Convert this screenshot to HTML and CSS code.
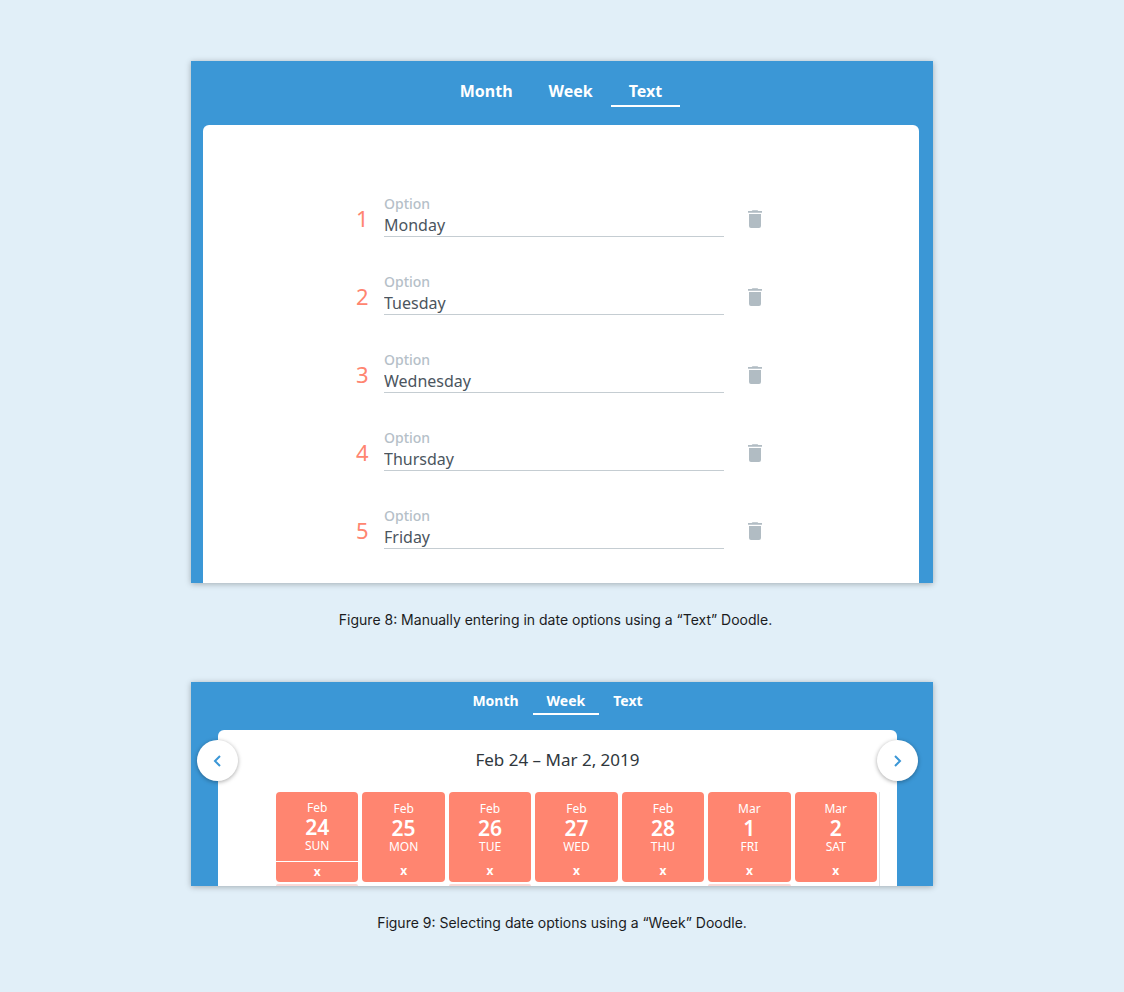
FILE: index.html
```html
<!DOCTYPE html>
<html lang="en">
<head>
<meta charset="utf-8">
<meta name="viewport" content="width=device-width, initial-scale=1">
<title>Doodle date options</title>
<link rel="stylesheet" href="styles.css">
</head>
<body>
<svg class="defs" width="0" height="0" aria-hidden="true">
  <symbol id="trash" viewBox="0 0 14 18"><path d="M4.5 0.3h5l.8.7H14v1.7H0V1h3.7zM1 4h12v12a2 2 0 0 1-2 2H3a2 2 0 0 1-2-2z" fill="currentColor"/></symbol>
</svg>
<main class="page">
  <figure class="figure">
    <div class="shot">
      <nav class="tabs tabs-large">
        <button class="tab" type="button">Month</button>
        <button class="tab" type="button">Week</button>
        <button class="tab active" type="button">Text</button>
      </nav>
      <div class="card card-text">
        <ol class="options">
          <li class="option"><span class="num">1</span><div class="field"><label for="o1">Option</label><input id="o1" type="text" value="Monday"></div><button class="delete" type="button" aria-label="Delete option 1"><svg><use href="#trash"/></svg></button></li>
          <li class="option"><span class="num">2</span><div class="field"><label for="o2">Option</label><input id="o2" type="text" value="Tuesday"></div><button class="delete" type="button" aria-label="Delete option 2"><svg><use href="#trash"/></svg></button></li>
          <li class="option"><span class="num">3</span><div class="field"><label for="o3">Option</label><input id="o3" type="text" value="Wednesday"></div><button class="delete" type="button" aria-label="Delete option 3"><svg><use href="#trash"/></svg></button></li>
          <li class="option"><span class="num">4</span><div class="field"><label for="o4">Option</label><input id="o4" type="text" value="Thursday"></div><button class="delete" type="button" aria-label="Delete option 4"><svg><use href="#trash"/></svg></button></li>
          <li class="option"><span class="num">5</span><div class="field"><label for="o5">Option</label><input id="o5" type="text" value="Friday"></div><button class="delete" type="button" aria-label="Delete option 5"><svg><use href="#trash"/></svg></button></li>
        </ol>
      </div>
    </div>
    <figcaption class="caption caption-text">Figure 8: Manually entering in date options using a “Text” Doodle.</figcaption>
  </figure>

  <figure class="figure">
    <div class="shot">
      <nav class="tabs tabs-small">
        <button class="tab" type="button">Month</button>
        <button class="tab active" type="button">Week</button>
        <button class="tab" type="button">Text</button>
      </nav>
      <div class="card card-week">
        <button class="arrow prev" type="button" aria-label="Previous week"><svg viewBox="0 0 12 12"><path d="M8 1 3 6l5 5"/></svg></button>
        <button class="arrow next" type="button" aria-label="Next week"><svg viewBox="0 0 12 12"><path d="m3 1 5 5-5 5"/></svg></button>
        <h2 class="range">Feb 24 – Mar 2, 2019</h2>
        <div class="week">
          <div class="day split"><span>Feb</span><strong>24</strong><span>SUN</span><button type="button">x</button></div>
          <div class="day"><span>Feb</span><strong>25</strong><span>MON</span><button type="button">x</button></div>
          <div class="day"><span>Feb</span><strong>26</strong><span>TUE</span><button type="button">x</button></div>
          <div class="day"><span>Feb</span><strong>27</strong><span>WED</span><button type="button">x</button></div>
          <div class="day"><span>Feb</span><strong>28</strong><span>THU</span><button type="button">x</button></div>
          <div class="day"><span>Mar</span><strong>1</strong><span>FRI</span><button type="button">x</button></div>
          <div class="day"><span>Mar</span><strong>2</strong><span>SAT</span><button type="button">x</button></div>
          <i class="slot"></i><i></i><i class="slot"></i><i></i><i></i><i class="slot"></i><i></i>
        </div>
      </div>
    </div>
    <figcaption class="caption">Figure 9: Selecting date options using a “Week” Doodle.</figcaption>
  </figure>
</main>
</body>
</html>
```

FILE: styles.css
```css
* { box-sizing: border-box; }

body {
  margin: 0;
  background: #e1eff8;
  font-family: "Noto Sans", "Open Sans", sans-serif;
}

button {
  border: 0;
  padding: 0;
  background: none;
  color: inherit;
  font-family: inherit;
}

.defs { position: absolute; }

.page {
  display: flex;
  flex-direction: column;
  gap: 52px;
  max-width: 742px;
  margin: 0 auto;
  padding: 61px 0;
}

.figure { margin: 0; }

.shot {
  overflow: hidden;
  background: #3b97d6;
  box-shadow: 0 1px 6px rgba(0, 0, 0, 0.28);
}

.tabs {
  display: flex;
  justify-content: center;
  color: #fff;
}

.tab {
  border-bottom: 2px solid transparent;
  font-weight: 700;
}

.tab.active { border-bottom-color: #fff; }

.tabs-large { padding: 16px 2px 18px 0; }
.tabs-large .tab { padding: 0 18px; font-size: 16px; line-height: 28px; }

.tabs-small { padding: 7px 9px 15px 0; }
.tabs-small .tab { padding: 0 14px; font-size: 14px; line-height: 24px; }

.card {
  background: #fff;
  border-radius: 6px 6px 0 0;
}

.card-text {
  margin: 0 14px 0 12px;
  padding: 69px 20px 34px;
}

.options {
  display: flex;
  flex-direction: column;
  gap: 35px;
  max-width: 410px;
  margin: 0 auto;
  padding: 0;
  list-style: none;
}

.option {
  display: grid;
  grid-template-columns: 28px 1fr 42px;
  align-items: center;
}

.num {
  padding-top: 5px;
  color: #ff8570;
  font-size: 22px;
  line-height: 28px;
}

.field {
  display: flex;
  flex-direction: column;
  border-bottom: 1px solid #c5cdd2;
}

.field label {
  color: #b5c0c8;
  font-size: 14px;
  font-weight: 500;
  line-height: 20px;
}

.field input {
  width: 100%;
  height: 22px;
  border: 0;
  padding: 0;
  background: none;
  color: #4b555e;
  font-family: inherit;
  font-size: 16px;
}

.delete {
  justify-self: end;
  display: flex;
  padding: 7px 4px 0;
  color: #b1bcc3;
}

.delete svg { width: 14px; height: 18px; }

.caption {
  padding-top: 26px;
  color: #1b1c1e;
  font-family: Inter, sans-serif;
  font-size: 14px;
  line-height: 21px;
  text-align: center;
}

.caption-text { padding-right: 13px; }

.card-week {
  position: relative;
  margin: 0 36px 0 27px;
  padding: 16px 17px 0 58px;
}

.arrow {
  position: absolute;
  top: 10px;
  display: flex;
  align-items: center;
  justify-content: center;
  width: 41px;
  height: 41px;
  border-radius: 50%;
  background: #fff;
  box-shadow: 0 1px 4px rgba(0, 0, 0, 0.35);
}

.prev { left: -21px; }
.next { right: -21px; }

.arrow svg {
  width: 12px;
  height: 12px;
  fill: none;
  stroke: #3b97d6;
  stroke-width: 2;
}

.range {
  margin: 0 41px 18px 0;
  color: #2f373d;
  font-size: 17px;
  font-weight: 400;
  line-height: 28px;
  text-align: center;
}

.week {
  display: grid;
  grid-template-columns: repeat(7, 1fr);
  grid-template-rows: auto 2px;
  gap: 2px 4px;
  padding-right: 2px;
  border-right: 1px solid #dde1e4;
}

.day {
  display: flex;
  flex-direction: column;
  align-items: center;
  padding-top: 9px;
  overflow: hidden;
  border-radius: 4px;
  background: #ff8570;
  color: #fff;
  font-size: 12px;
  line-height: 16px;
}

.day strong {
  font-size: 21px;
  font-weight: 600;
  line-height: 22px;
}

.day button {
  align-self: stretch;
  margin-top: 5px;
  font-size: 12px;
  font-weight: 700;
  line-height: 22px;
}

.split { padding-top: 8px; }

.split button {
  margin-top: 7px;
  border-top: 1px solid #fff;
  line-height: 20px;
}

.slot {
  border-radius: 4px 4px 0 0;
  background: #fbd9d6;
}
```
